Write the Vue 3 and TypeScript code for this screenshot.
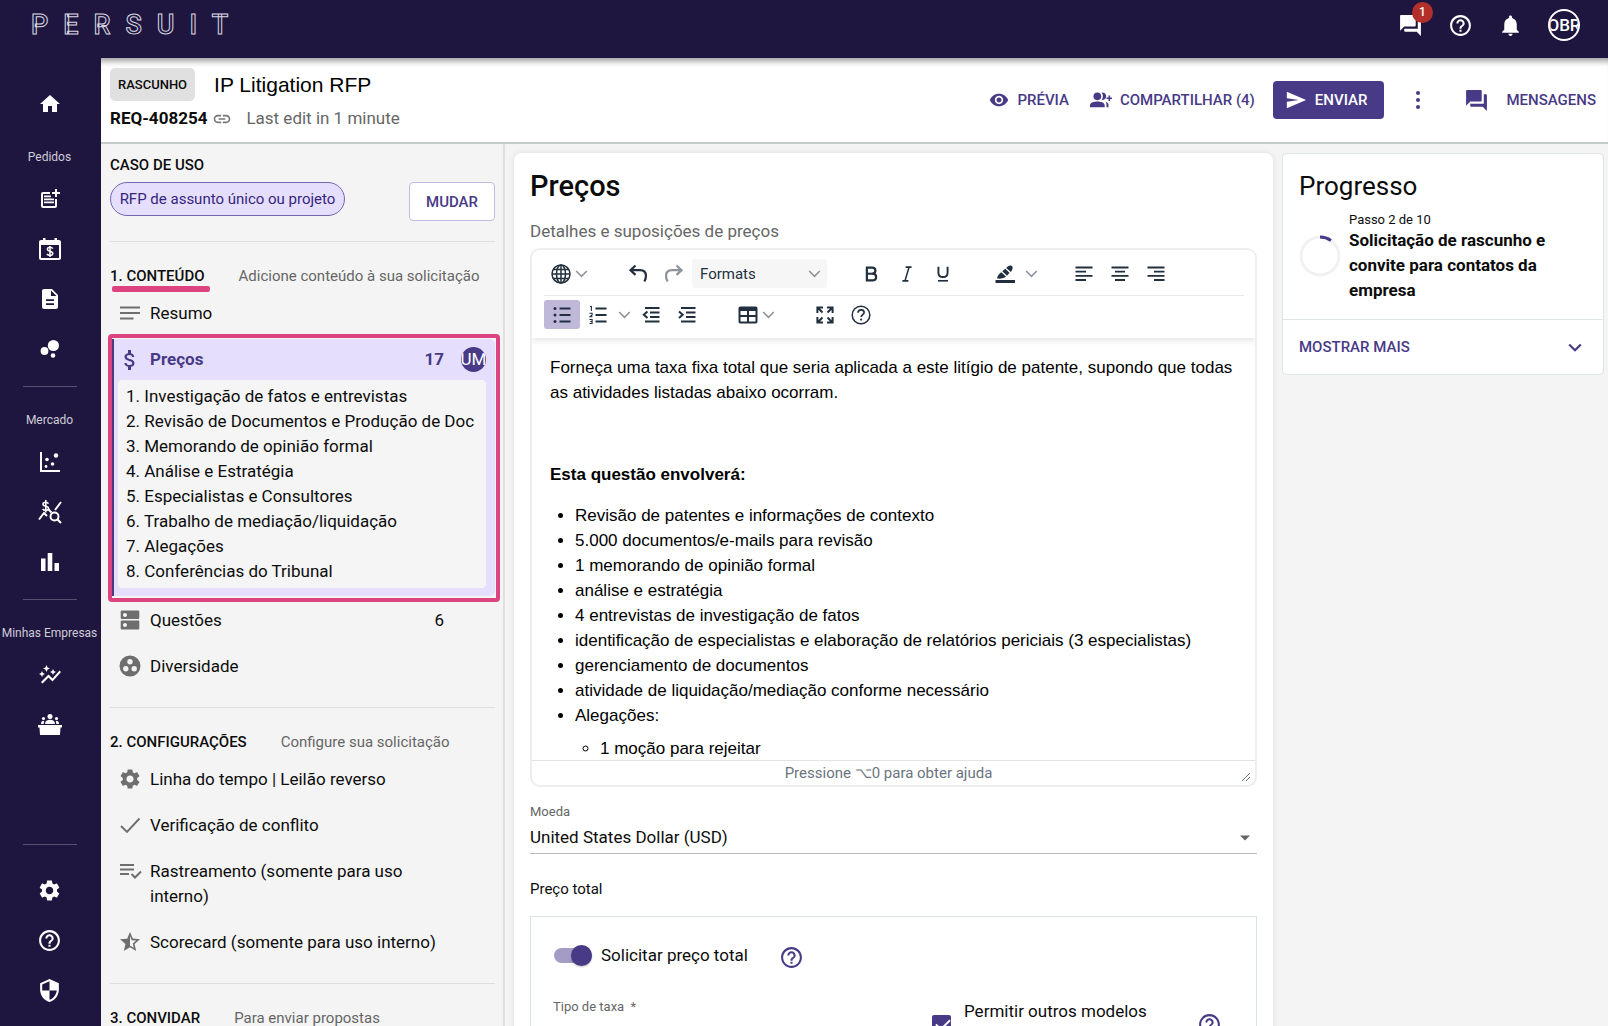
<script setup lang="ts">
import { h, ref } from 'vue'

const icons: Record<string, string> = {
  home: '<path d="M10 20v-6h4v6h5v-8h3L12 3 2 12h3v8z"/>',
  postAdd: '<path d="M17 19H5V7h7V5H5c-1.100 0-2 .9-2 2v12c0 1.100.9 2 2 2h12c1.100 0 2-.9 2-2v-7h-2z"/><path d="M19 2h-2v3h-3v2h3v3h2V7h3V5h-3zM6 8.500h7v1.800H6zM6 11.500h10v1.800H6zM6 14.500h10v1.800H6z"/>',
  calendar: '<path fill-rule="evenodd" d="M20 3h-1V1h-2.500v2h-9V1H5v2H3c-1.100 0-2 .9-2 2v16c0 1.100.9 2 2 2h18c1.100 0 2-.9 2-2V5c0-1.100-.9-2-2-2zm1 18H3V8h18z"/><path d="M14.800 11.600c-.6-.9-1.600-1.300-2.800-1.300-1.500 0-2.600.7-2.600 1.900 0 2.700 5.400 1.300 5.400 4.200 0 1.300-1.200 2-2.800 2-1.400 0-2.500-.5-3-1.500M12 9v11" fill="none" stroke="currentColor" stroke-width="1.500"/>',
  description: '<path d="M14 2H6c-1.100 0-2 .9-2 2v16c0 1.100.9 2 2 2h12c1.100 0 2-.9 2-2V8zm2 16H8v-1.700h8zm0-4H8v-1.700h8zm-3-5V3.500L18.500 9z"/>',
  bubbles: '<circle cx="6.500" cy="14" r="3.900"/><circle cx="15.400" cy="8.500" r="5.600"/><circle cx="15" cy="18.500" r="2.300"/>',
  scatter: '<path d="M2 2h2v18h18v2H2z"/><circle cx="8" cy="16.500" r="1.400"/><circle cx="9" cy="9.500" r="1.800"/><circle cx="14.500" cy="14" r="1.800"/><circle cx="18" cy="5.500" r="2.200"/>',
  queryStats: '<path d="M1 19.500 6 13l3 3M17 10l6-8M10 9l3.500 3.500" fill="none" stroke="currentColor" stroke-width="2"/><path d="M10.500 3.600C9.800 2.600 8.800 2.200 7.700 2.200 6.100 2.200 5 3 5 4.200c0 2.700 5.600 1.500 5.600 4.100 0 1.300-1.200 2-2.900 2-1.400 0-2.500-.5-3-1.500M7.800 0v12.500" fill="none" stroke="currentColor" stroke-width="1.600"/><circle cx="16.500" cy="16.500" r="4" fill="none" stroke="currentColor" stroke-width="2"/><path d="m19 19 4 4" stroke="currentColor" stroke-width="2.200"/>',
  bars: '<path d="M3 8.500h4.500V21H3zM16.500 13H21v8h-4.500zM9.700 3h4.600v18H9.700z"/>',
  autoGraph: '<path d="M14.060 9.940 12 9l2.060-.94L15 6l.94 2.060L18 9l-2.060.94L15 12zM4 14l.94-2.060L7 11l-2.060-.94L4 8l-.94 2.060L1 11l2.060.94zM8.500 9l1.090-2.410L12 5.500 9.590 4.410 8.500 2 7.410 4.410 5 5.500l2.410 1.090zM4.500 20.500l6-6.010 4 4L23 8.930l-1.410-1.410-7.090 7.970-4-4L3 19z"/>',
  meeting: '<path d="M0 12h24v2.500h-1.500L22 22H2l-.5-7.500H0z"/><circle cx="12" cy="3.500" r="2.500"/><path d="M7 11c0-2.800 2.200-4.200 5-4.200s5 1.400 5 4.200z"/><circle cx="5.500" cy="5.500" r="1.600"/><circle cx="18.500" cy="5.500" r="1.600"/><path d="M3 11c0-2 .8-3.200 3.200-3.200L5.700 11zM21 11c0-2-.8-3.200-3.200-3.200l.5 3.200z"/>',
  settings: '<path d="M19.140 12.940c.04-.3.060-.61.060-.94 0-.32-.020-.64-.070-.94l2.030-1.580c.18-.14.230-.41.120-.61l-1.920-3.320c-.12-.22-.37-.29-.59-.22l-2.390.96c-.5-.38-1.030-.7-1.620-.94l-.36-2.540c-.04-.24-.24-.41-.48-.41h-3.840c-.24 0-.43.170-.47.410l-.36 2.540c-.59.240-1.130.570-1.620.940l-2.390-.96c-.22-.08-.47 0-.59.220L2.740 8.870c-.12.210-.08.470.12.610l2.030 1.580c-.05.300-.09.630-.09.940s.02.640.07.940l-2.030 1.580c-.18.140-.23.410-.12.610l1.920 3.320c.12.220.37.290.59.220l2.390-.96c.5.380 1.030.7 1.620.94l.36 2.540c.05.240.24.410.48.410h3.840c.24 0 .44-.17.47-.41l.36-2.540c.59-.24 1.130-.56 1.620-.94l2.390.96c.22.080.47 0 .59-.22l1.920-3.320c.12-.22.070-.47-.12-.61zM12 15.600c-1.980 0-3.600-1.620-3.600-3.600s1.620-3.600 3.600-3.600 3.600 1.620 3.600 3.600-1.620 3.600-3.600 3.600z"/>',
  help: '<path d="M11 18h2v-2h-2zm1-16C6.480 2 2 6.480 2 12s4.480 10 10 10 10-4.480 10-10S17.520 2 12 2zm0 18c-4.410 0-8-3.590-8-8s3.590-8 8-8 8 3.590 8 8-3.590 8-8 8zm0-14c-2.210 0-4 1.790-4 4h2c0-1.100.9-2 2-2s2 .9 2 2c0 2-3 1.750-3 5h2c0-2.250 3-2.500 3-5 0-2.210-1.790-4-4-4z"/>',
  shield: '<path d="M12 1 3 5v6c0 5.550 3.840 10.740 9 12 5.160-1.260 9-6.450 9-12V5zm0 10.990h7c-.53 4.120-3.280 7.790-7 8.940V12H5V6.300l7-3.110z"/>',
  forum: '<path d="M21 6h-2v9H6v2c0 .55.450 1 1 1h11l4 4V7c0-.55-.45-1-1-1zm-4 6V3c0-.55-.45-1-1-1H3c-.55 0-1 .45-1 1v14l4-4h10c.55 0 1-.45 1-1z"/>',
  bell: '<path d="M12 22c1.100 0 2-.9 2-2h-4c0 1.100.89 2 2 2zm6-6v-5c0-3.070-1.640-5.640-4.500-6.320V4c0-.83-.67-1.500-1.500-1.500s-1.500.67-1.500 1.500v.68C7.630 5.360 6 7.920 6 11v5l-2 2v1h16v-1z"/>',
  eye: '<path d="M12 4.500C7 4.500 2.730 7.610 1 12c1.730 4.390 6 7.500 11 7.500s9.270-3.110 11-7.500c-1.730-4.390-6-7.500-11-7.500zM12 17c-2.760 0-5-2.240-5-5s2.240-5 5-5 5 2.240 5 5-2.240 5-5 5zm0-8c-1.660 0-3 1.340-3 3s1.340 3 3 3 3-1.340 3-3-1.340-3-3-3z"/>',
  groupAdd: '<circle cx="8" cy="8" r="4.200"/><path d="M0 20v-2.500C0 14.600 4.500 13.500 8 13.500s8 1.100 8 4V20zM12.500 3.900c3.800-.3 5.200 2 5.200 4.100s-1.500 4.400-5.200 4.100c2-2.200 2-6 0-8.200zM17 13.800c2 .7 3.200 1.800 3.200 3.700V20H18v-2.500c0-1.500-.4-2.700-1-3.700zM20.200 7h1.800v2.200h2.200V11H22v2.200h-1.800V11H18V9.200h2.200z"/>',
  send: '<path d="M2 21 23 12 2 3v7l13 2-13 2z"/>',
  more: '<circle cx="12" cy="5" r="2"/><circle cx="12" cy="12" r="2"/><circle cx="12" cy="19" r="2"/>',
  link: '<path d="M3.900 12c0-1.710 1.390-3.100 3.100-3.100h4V7H7c-2.760 0-5 2.240-5 5s2.240 5 5 5h4v-1.900H7c-1.710 0-3.100-1.390-3.100-3.100zM8 13h8v-2H8zm9-6h-4v1.900h4c1.710 0 3.100 1.390 3.100 3.100s-1.390 3.100-3.100 3.100h-4V17h4c2.760 0 5-2.240 5-5s-2.240-5-5-5z"/>',
  lines: '<path d="M2 5.500h20v1.900H2zM2 11h20v1.900H2zM2 16.500h13.500v1.900H2z"/>',
  dollar: '<path d="M11.800 10.900c-2.270-.59-3-1.200-3-2.150 0-1.090 1.010-1.850 2.700-1.850 1.780 0 2.440.85 2.500 2.100h2.210c-.07-1.720-1.120-3.300-3.210-3.810V2h-3v3.160c-1.940.42-3.500 1.680-3.500 3.610 0 2.310 1.910 3.460 4.700 4.130 2.500.6 3 1.480 3 2.410 0 .69-.49 1.790-2.700 1.790-2.060 0-2.870-.92-2.980-2.100h-2.200c.12 2.190 1.760 3.420 3.680 3.830V22h3v-3.150c1.950-.37 3.500-1.500 3.500-3.550 0-2.840-2.430-3.810-4.700-4.400z"/>',
  dns: '<path d="M20 12.500H4c-.8 0-1.300.5-1.300 1.300v6.400c0 .8.500 1.300 1.300 1.300h16c.8 0 1.300-.5 1.300-1.300v-6.400c0-.8-.5-1.300-1.300-1.300zM7 19c-1.100 0-2-.9-2-2s.9-2 2-2 2 .9 2 2-.9 2-2 2zM20 2.500H4c-.8 0-1.300.5-1.300 1.300v5.900c0 .8.500 1.300 1.300 1.300h16c.8 0 1.300-.5 1.300-1.300V3.800c0-.8-.5-1.300-1.300-1.300zM7 9c-1.100 0-2-.9-2-2s.9-2 2-2 2 .9 2 2-.9 2-2 2z"/>',
  groupWork: '<path fill-rule="evenodd" d="M12 1.500a10.500 10.500 0 1 0 0 21 10.500 10.500 0 0 0 0-21zM7.800 17.500a2.700 2.700 0 1 1 0-5.400 2.700 2.700 0 0 1 0 5.400zM9.300 7.700a2.700 2.700 0 1 1 5.400 0 2.700 2.700 0 0 1-5.400 0zM16.200 17.500a2.700 2.700 0 1 1 0-5.400 2.700 2.700 0 0 1 0 5.400z"/>',
  check: '<path d="m3 13 6 6L21.500 5.500" fill="none" stroke="currentColor" stroke-width="1.900"/>',
  rule: '<path d="M2 5h14v2H2zM2 9.500h14v2H2zM2 14h9v2H2z"/><path d="m13.500 15 3.500 3.500 6-6" fill="none" stroke="currentColor" stroke-width="2"/>',
  starHalf: '<path d="m22 9.240-7.190-.62L12 2 9.190 8.630 2 9.240l5.460 4.730L5.820 21 12 17.270 18.180 21l-1.630-7.030zM12 15.400V6.100l1.710 4.040 4.380.38-3.320 2.880 1 4.280z"/>',
  chevron: '<path d="m5 9 7 7 7-7" fill="none" stroke="currentColor" stroke-width="2.600"/>',
  chevronThin: '<path d="m4.500 8.500 7.500 7.500 7.500-7.500" fill="none" stroke="currentColor" stroke-width="2.200"/>',
  caret: '<path d="m7 9.500 5 5 5-5z"/>',
  globe: '<g fill="none" stroke="currentColor" stroke-width="1.500"><circle cx="12" cy="12" r="9"/><ellipse cx="12" cy="12" rx="4.500" ry="9"/><path d="M12 3v18M3 12h18M4.500 7.500h15M4.500 16.500h15"/></g>',
  undo: '<path d="M9.500 3.500 4.500 8.200l5 4.700M5 8.200h9c3.900 0 6 2.400 6 5.800 0 2-.6 3.800-1.600 5.500" fill="none" stroke="currentColor" stroke-width="2.200"/>',
  redo: '<path d="m14.500 3.500 5 4.700-5 4.700M19 8.200h-9c-3.900 0-6 2.400-6 5.800 0 2 .6 3.800 1.600 5.500" fill="none" stroke="currentColor" stroke-width="2.200"/>',
  bold: '<path d="M7.500 5h5.700c2.200 0 3.600 1.200 3.600 3.300 0 1.900-1.300 3.200-3.200 3.300 2.400.1 4 1.300 4 3.600 0 2.500-1.700 3.800-4.400 3.800H7.500z" fill="none" stroke="currentColor" stroke-width="2.400"/><path d="M7.500 11.700h7" stroke="currentColor" stroke-width="2.200"/>',
  italic: '<path d="M10.500 4.500H17M7 19.500h6.500M14.200 4.500l-4.400 15" fill="none" stroke="currentColor" stroke-width="1.700"/>',
  underline: '<path d="M7 4v6.500c0 3 1.800 4.700 5 4.700s5-1.700 5-4.700V4" fill="none" stroke="currentColor" stroke-width="2.100"/><path d="M6.500 18.500h11v1.800h-11z"/>',
  highlight: '<path d="M2.500 18h19.500v3H2.500z"/><path d="M4 16.500c.5-3 2-4.500 4.200-6.300l4.800 4.300c-2 1.700-5 2.500-9 2zM9.300 9.300l3-2.500 4.200 4-2.500 3zM13.200 6c1.600-2 3.500-3 5.500-2.200 1.500 1.200 1.300 3.400-.8 6.200z"/>',
  alignLeft: '<path d="M3.500 4.500h17v1.900h-17zM3.500 8.700H14v1.900H3.500zM3.500 12.900h17v1.900h-17zM3.500 17.100H14V19H3.500z"/>',
  alignCenter: '<path d="M3.500 4.500h17v1.900h-17zM7 8.700h10v1.900H7zM3.500 12.900h17v1.900h-17zM7 17.100h10V19H7z"/>',
  alignRight: '<path d="M3.500 4.500h17v1.900h-17zM10 8.700h10.500v1.900H10zM3.500 12.900h17v1.900h-17zM10 17.100h10.500V19H10z"/>',
  bullets: '<circle cx="5" cy="5.500" r="1.500"/><circle cx="5" cy="12" r="1.500"/><circle cx="5" cy="18.500" r="1.500"/><path d="M9.500 4.500h11v2h-11zM9.500 11h11v2h-11zM9.500 17.500h11v2h-11z"/>',
  numbers: '<path d="M9.500 4.500h11v2h-11zM9.500 11h11v2h-11zM9.500 17.500h11v2h-11z"/><path d="M4 3.500h1.400V8M3.500 10.200h2.600v1.700L4 13.800h2.500M3.500 16.500h2.600v4H3.500M4.300 18.500h1.800" fill="none" stroke="currentColor" stroke-width="1.100"/>',
  outdent: '<path d="M6 4h14.500v2H6zM11 8.500h9.500v2H11zM11 13h9.500v2H11zM6 17.500h14.500v2H6z"/><path d="M8.500 8.500 4.800 11.800l3.700 3.200" fill="none" stroke="currentColor" stroke-width="2"/>',
  indent: '<path d="M6 4h14.500v2H6zM11 8.500h9.500v2H11zM11 13h9.500v2H11zM6 17.500h14.500v2H6z"/><path d="m4 8.500 3.700 3.300L4 15" fill="none" stroke="currentColor" stroke-width="2"/>',
  table: '<path fill-rule="evenodd" d="M4.500 3.500h15c1.200 0 2 .8 2 2v13c0 1.200-.8 2-2 2h-15c-1.200 0-2-.8-2-2v-13c0-1.200.8-2 2-2zM4.500 8v4h6.500V8zM13 8v4h6.500V8zM4.500 14v4.500h6.500V14zM13 14v4.500h6.500V14z"/>',
  fullscreen: '<path d="M4.400 10V4.400H10M14 4.400h5.600V10M19.600 14v5.600H14M10 19.600H4.400V14M4.800 4.800l4.700 4.700M19.200 4.800l-4.700 4.700M19.200 19.200l-4.700-4.700M4.800 19.200l4.700-4.700" fill="none" stroke="currentColor" stroke-width="2"/>',
  helpThin: '<circle cx="12" cy="12" r="8.800" fill="none" stroke="currentColor" stroke-width="1.500"/><path d="M9 9.800c.1-1.800 1.300-2.900 3.100-2.900 1.700 0 3 1 3 2.600 0 2.100-2.900 2.200-2.900 4.600" fill="none" stroke="currentColor" stroke-width="1.700"/><circle cx="12.100" cy="16.600" r="1.100"/>',
}

const Icon = (props: { name: string; size?: number }) =>
  h('svg', {
    viewBox: '0 0 24 24',
    width: props.size ?? 24,
    height: props.size ?? 24,
    fill: 'currentColor',
    'aria-hidden': 'true',
    innerHTML: icons[props.name],
  })
Icon.props = ['name', 'size']

interface NavItem { icon: string; label: string }
interface NavGroup { title: string; items: NavItem[] }

const navGroups: NavGroup[] = [
  {
    title: 'Pedidos',
    items: [
      { icon: 'postAdd', label: 'Novo pedido' },
      { icon: 'calendar', label: 'Faturas' },
      { icon: 'description', label: 'Documentos' },
      { icon: 'bubbles', label: 'Grupos' },
    ],
  },
  {
    title: 'Mercado',
    items: [
      { icon: 'scatter', label: 'Dispersão' },
      { icon: 'queryStats', label: 'Taxas' },
      { icon: 'bars', label: 'Relatórios' },
    ],
  },
  {
    title: 'Minhas Empresas',
    items: [
      { icon: 'autoGraph', label: 'Desempenho' },
      { icon: 'meeting', label: 'Painel' },
    ],
  },
]
const footerNav: NavItem[] = [
  { icon: 'settings', label: 'Configurações' },
  { icon: 'help', label: 'Ajuda' },
  { icon: 'shield', label: 'Segurança' },
]

const priceItems = [
  'Investigação de fatos e entrevistas',
  'Revisão de Documentos e Produção de Doc',
  'Memorando de opinião formal',
  'Análise e Estratégia',
  'Especialistas e Consultores',
  'Trabalho de mediação/liquidação',
  'Alegações',
  'Conferências do Tribunal',
]
const contentItems = [
  { icon: 'dns', label: 'Questões', count: 6 },
  { icon: 'groupWork', label: 'Diversidade', count: null },
]
const configItems = [
  { icon: 'settings', label: 'Linha do tempo | Leilão reverso' },
  { icon: 'check', label: 'Verificação de conflito' },
  { icon: 'rule', label: 'Rastreamento (somente para uso interno)' },
  { icon: 'starHalf', label: 'Scorecard (somente para uso interno)' },
]
const scope = [
  'Revisão de patentes e informações de contexto',
  '5.000 documentos/e-mails para revisão',
  '1 memorando de opinião formal',
  'análise e estratégia',
  '4 entrevistas de investigação de fatos',
  'identificação de especialistas e elaboração de relatórios periciais (3 especialistas)',
  'gerenciamento de documentos',
  'atividade de liquidação/mediação conforme necessário',
]

const askTotal = ref(true)
const allowOther = ref(true)
</script>

<template>
  <div class="app">
    <header class="topbar">
      <a href="#" class="logo">PERSUIT</a>
      <div class="top-actions">
        <button type="button" class="plain chat" aria-label="Conversas">
          <Icon name="forum" :size="25" /><span class="badge">1</span>
        </button>
        <button type="button" class="plain" aria-label="Ajuda"><Icon name="help" :size="25" /></button>
        <button type="button" class="plain" aria-label="Notificações"><Icon name="bell" :size="25" /></button>
        <button type="button" class="plain user"><span>OBR</span></button>
      </div>
    </header>

    <div class="body">
      <nav class="rail">
        <a href="#" class="rail-item" aria-label="Início"><Icon name="home" /></a>
        <template v-for="(group, i) in navGroups" :key="group.title">
          <hr v-if="i > 0" class="rail-rule" />
          <div class="rail-title">{{ group.title }}</div>
          <a v-for="item in group.items" :key="item.icon" href="#" class="rail-item" :aria-label="item.label">
            <Icon :name="item.icon" />
          </a>
        </template>
        <div class="rail-foot">
          <hr class="rail-rule" />
          <a v-for="item in footerNav" :key="item.icon" href="#" class="rail-item" :aria-label="item.label">
            <Icon :name="item.icon" :size="25" />
          </a>
        </div>
      </nav>

      <div class="page">
        <div class="page-head">
          <div class="ident">
            <div class="ident-row">
              <span class="status">RASCUNHO</span>
              <h1 class="title">IP Litigation RFP</h1>
            </div>
            <div class="ident-row second">
              <strong>REQ-408254</strong>
              <button type="button" class="plain link" aria-label="Copiar link"><Icon name="link" :size="20" /></button>
              <span class="muted">Last edit in 1 minute</span>
            </div>
          </div>
          <div class="head-actions">
            <button type="button" class="action"><Icon name="eye" :size="20" />PRÉVIA</button>
            <button type="button" class="action share"><Icon name="groupAdd" :size="22" />COMPARTILHAR (4)</button>
            <button type="button" class="action send"><Icon name="send" :size="22" />ENVIAR</button>
            <button type="button" class="action dots" aria-label="Mais opções"><Icon name="more" /></button>
            <button type="button" class="action messages"><Icon name="forum" :size="25" />MENSAGENS</button>
          </div>
        </div>

        <div class="columns">
          <aside class="outline">
            <h2 class="caps">CASO DE USO</h2>
            <div class="use-case">
              <span class="pill">RFP de assunto único ou projeto</span>
              <button type="button" class="change">MUDAR</button>
            </div>
            <hr />
            <div class="section-head">
              <h2 class="caps marked">1. CONTEÚDO</h2><span>Adicione conteúdo à sua solicitação</span>
            </div>
            <a href="#" class="step"><Icon name="lines" class="step-icon" /><span>Resumo</span></a>
            <div class="current">
              <a href="#" class="current-head">
                <Icon name="dollar" /><span>Preços</span>
                <span class="count">17</span><span class="avatar"><span>UM</span></span>
              </a>
              <ol class="prices">
                <li v-for="(item, i) in priceItems" :key="item"><span>{{ i + 1 }}.</span> {{ item }}</li>
              </ol>
            </div>
            <div class="steps">
              <a v-for="item in contentItems" :key="item.label" href="#" class="step">
                <Icon :name="item.icon" class="step-icon" /><span>{{ item.label }}</span>
                <span v-if="item.count" class="count">{{ item.count }}</span>
              </a>
            </div>
            <hr class="wide" />
            <div class="section-head">
              <h2 class="caps">2. CONFIGURAÇÕES</h2><span>Configure sua solicitação</span>
            </div>
            <div class="steps flush">
              <a v-for="item in configItems" :key="item.label" href="#" class="step">
                <Icon :name="item.icon" class="step-icon" /><span class="step-text">{{ item.label }}</span>
              </a>
            </div>
            <hr class="wide" />
            <div class="section-head">
              <h2 class="caps">3. CONVIDAR</h2><span>Para enviar propostas</span>
            </div>
          </aside>

          <main class="card">
            <h2 class="card-title">Preços</h2>
            <div id="details-label" class="field-label">Detalhes e suposições de preços</div>
            <div class="editor">
              <div class="toolbar" role="toolbar">
                <div class="tools">
                  <div class="group">
                    <button type="button" class="tool split" aria-label="Idioma"><Icon name="globe" /><Icon name="chevronThin" :size="17" class="faint" /></button>
                  </div>
                  <div class="group">
                    <button type="button" class="tool" aria-label="Desfazer"><Icon name="undo" /></button>
                    <button type="button" class="tool faint" aria-label="Refazer"><Icon name="redo" /></button>
                    <div class="formats">
                      <select aria-label="Formats"><option>Formats</option></select>
                      <Icon name="chevronThin" :size="17" class="faint formats-arrow" />
                    </div>
                  </div>
                  <div class="group">
                    <button type="button" class="tool" aria-label="Negrito"><Icon name="bold" :size="22" /></button>
                    <button type="button" class="tool" aria-label="Itálico"><Icon name="italic" :size="22" /></button>
                    <button type="button" class="tool" aria-label="Sublinhado"><Icon name="underline" :size="22" /></button>
                  </div>
                  <div class="group">
                    <button type="button" class="tool" aria-label="Realce"><Icon name="highlight" /></button>
                    <button type="button" class="tool narrow faint" aria-label="Cor do realce"><Icon name="chevronThin" :size="17" /></button>
                  </div>
                  <div class="group">
                    <button type="button" class="tool" aria-label="Alinhar à esquerda"><Icon name="alignLeft" /></button>
                    <button type="button" class="tool" aria-label="Centralizar"><Icon name="alignCenter" /></button>
                    <button type="button" class="tool" aria-label="Alinhar à direita"><Icon name="alignRight" /></button>
                  </div>
                </div>
                <div class="tools lower">
                  <div class="group">
                    <button type="button" class="tool active" aria-label="Marcadores"><Icon name="bullets" /></button>
                    <button type="button" class="tool" aria-label="Numeração"><Icon name="numbers" /></button>
                    <button type="button" class="tool narrow faint" aria-label="Tipo de numeração"><Icon name="chevronThin" :size="17" /></button>
                    <button type="button" class="tool" aria-label="Diminuir recuo"><Icon name="outdent" /></button>
                    <button type="button" class="tool" aria-label="Aumentar recuo"><Icon name="indent" /></button>
                  </div>
                  <div class="group">
                    <button type="button" class="tool split" aria-label="Tabela"><Icon name="table" /><Icon name="chevronThin" :size="17" class="faint" /></button>
                  </div>
                  <div class="group">
                    <button type="button" class="tool" aria-label="Tela cheia"><Icon name="fullscreen" /></button>
                    <button type="button" class="tool" aria-label="Ajuda do editor"><Icon name="helpThin" /></button>
                  </div>
                </div>
              </div>
              <div class="content" role="textbox" contenteditable="true" spellcheck="false" aria-labelledby="details-label">
                <p>Forneça uma taxa fixa total que seria aplicada a este litígio de patente, supondo que todas as atividades listadas abaixo ocorram.</p>
                <p><br /></p>
                <p><strong>Esta questão envolverá:</strong></p>
                <ul>
                  <li v-for="line in scope" :key="line">{{ line }}</li>
                  <li>Alegações:
                    <ul><li>1 moção para rejeitar</li></ul>
                  </li>
                </ul>
              </div>
              <div class="statusbar">
                <span>Pressione ⌥0 para obter ajuda</span>
                <svg class="grip" viewBox="0 0 10 10" width="10" height="10" aria-hidden="true">
                  <path d="M1 9 9 1M5 9l4-4" fill="none" stroke="currentColor" stroke-width="1" />
                </svg>
              </div>
            </div>

            <div class="currency">
              <label for="currency">Moeda</label>
              <div class="select">
                <select id="currency"><option>United States Dollar (USD)</option></select>
                <Icon name="caret" class="select-arrow" />
              </div>
            </div>

            <h3 class="total-title">Preço total</h3>
            <section class="total">
              <div class="toggle-row">
                <label class="toggle">
                  <input v-model="askTotal" type="checkbox" role="switch" />
                  <span>Solicitar preço total</span>
                </label>
                <button type="button" class="plain hint" aria-label="Sobre o preço total"><Icon name="help" :size="25" /></button>
              </div>
              <div class="fee-row">
                <div class="fee-label">Tipo de taxa&nbsp; *</div>
                <div class="allow">
                  <input id="allow-other" v-model="allowOther" type="checkbox" />
                  <label for="allow-other">Permitir outros modelos</label>
                  <button type="button" class="plain hint" aria-label="Sobre outros modelos"><Icon name="help" :size="25" /></button>
                </div>
              </div>
            </section>
          </main>

          <aside class="progress">
            <h2>Progresso</h2>
            <div class="progress-body">
              <svg class="ring" viewBox="0 0 42 42" width="42" height="42" aria-hidden="true">
                <circle cx="21" cy="21" r="19" fill="none" stroke="#f2f2f2" stroke-width="3" />
                <path d="M21 2a19 19 0 0 1 11 3.500" fill="none" stroke="#483a87" stroke-width="3" />
              </svg>
              <div>
                <div class="step-no">Passo 2 de 10</div>
                <strong>Solicitação de rascunho e convite para contatos da empresa</strong>
              </div>
            </div>
            <button type="button" class="more">MOSTRAR MAIS<Icon name="chevron" :size="20" /></button>
          </aside>
        </div>
      </div>
    </div>
  </div>
</template>

<style>
body { margin: 0; }
</style>

<style scoped>
.app, .app * { box-sizing: border-box; }
.app {
  display: flex;
  flex-direction: column;
  height: 100vh;
  overflow: hidden;
  font: 17px/25px Roboto, sans-serif;
  color: #0c0c0c;
  background: #f4f4f4;
}
button, select { font-family: inherit; }
svg { display: block; flex: none; }
a { color: inherit; text-decoration: none; }
h1, h2, h3, p, ol, ul { margin: 0; padding: 0; }
hr { width: 100%; height: 1px; margin: 20px 0 0; border: 0; background: #dedede; }
.plain { display: flex; padding: 0; border: 0; background: none; color: inherit; cursor: pointer; }
.muted { color: #666; }

.topbar {
  display: flex;
  flex: none;
  justify-content: space-between;
  align-items: center;
  height: 58px;
  padding: 0 28px 8px 31px;
  background: #1e163e;
  color: #fff;
}
.logo {
  font-size: 27px;
  line-height: 32px;
  letter-spacing: 15px;
  color: #1e163e;
  font-weight: 500;
  -webkit-text-stroke: 1px #d8d6e2;
}
.top-actions { display: flex; align-items: center; gap: 25px; }
.chat { position: relative; }
.badge {
  position: absolute;
  top: -11px;
  left: 14px;
  width: 21px;
  height: 21px;
  border-radius: 50%;
  background: #b3302a;
  font: 500 12px/21px Roboto, sans-serif;
  text-align: center;
}
.user {
  justify-content: center;
  align-items: center;
  width: 32px;
  height: 32px;
  overflow: hidden;
  border: 2px solid #fff;
  border-radius: 50%;
  font-size: 17px;
  font-weight: 500;
}

.body { display: flex; flex: 1; min-height: 0; }
.rail {
  display: flex;
  flex: none;
  flex-direction: column;
  align-items: center;
  width: 101px;
  padding: 21px 2px 11px 0;
  background: #1e163e;
  color: #fff;
}
.rail-item { display: flex; justify-content: center; align-items: center; height: 50px; width: 50px; }
.rail-title {
  padding: 20px 0 9px;
  font-size: 12px;
  line-height: 16px;
  white-space: nowrap;
  color: #cfccd9;
}
.rail-rule { width: 54px; margin: 12px 0 5px; background: #57506f; }
.rail-foot { display: flex; flex-direction: column; align-items: center; margin-top: auto; }
.rail-foot .rail-rule { margin: 0 0 20px; }

.page { display: flex; flex: 1; flex-direction: column; min-width: 0; }
.page-head {
  display: flex;
  flex: none;
  justify-content: space-between;
  height: 86px;
  padding: 10px 12px 0 9px;
  border-bottom: 2px solid #c4cccb;
  background: #fff;
  box-shadow: inset 0 8px 6px -5px #0006;
}
.ident-row { display: flex; align-items: center; height: 33px; }
.ident-row.second { height: 25px; margin-top: 5px; }
.status {
  padding: 4px 8px;
  border-radius: 5px;
  background: #e0e0e0;
  font-size: 13px;
  font-weight: 500;
}
.title { margin-left: 19px; font: 21px/28px "Liberation Sans", Arial, sans-serif; color: #000; }
.link { margin: 0 14px 0 5px; color: #777; }
.head-actions { display: flex; align-items: center; height: 64px; }
.action {
  display: flex;
  align-items: center;
  gap: 8px;
  padding: 0;
  border: 0;
  background: none;
  font-size: 15px;
  font-weight: 500;
  line-height: 20px;
  color: #483a87;
  cursor: pointer;
}
.share { margin: 0 18px 0 21px; }
.send { height: 38px; padding: 0 17px 0 12px; border-radius: 4px; background: #483a87; color: #fff; }
.dots { margin: 0 34px 0 22px; }
.messages { gap: 17px; }

.columns { display: flex; flex: 1; align-items: flex-start; min-height: 0; overflow: hidden; }

.outline {
  flex: none;
  align-self: stretch;
  width: 404px;
  padding: 11px 8px 0 9px;
  overflow: hidden;
  border-right: 2px solid #e0e0e0;
}
.caps { font-size: 15px; font-weight: 500; line-height: 20px; white-space: nowrap; }
.use-case { display: flex; justify-content: space-between; align-items: flex-start; margin-top: 7px; }
.pill {
  height: 34px;
  padding: 0 8px;
  border: 1px solid #7466b0;
  border-radius: 17px;
  background: #e5defd;
  font-size: 15px;
  line-height: 32px;
  color: #35267c;
  min-width: 235px;
  text-align: center;
}
.change {
  width: 86px;
  height: 39px;
  border: 1px solid #c3bce0;
  border-radius: 4px;
  background: #fff;
  font-size: 15px;
  font-weight: 500;
  color: #483a87;
}
.section-head { display: flex; gap: 34px; margin: 24px 0 15px; font-size: 15px; line-height: 20px; color: #666; white-space: nowrap; }
.section-head .caps { color: #0c0c0c; }
.marked { position: relative; }
.marked::after {
  position: absolute;
  top: 20px;
  right: -5px;
  left: 2px;
  height: 6px;
  border-radius: 2px;
  background: #dd447f;
  content: "";
}
.step { display: flex; gap: 8px; padding: 0 51px 0 8px; }
.step-icon { color: #6e6e6e; }
.count { margin-left: auto; }
.current {
  position: relative;
  margin: 13px 0 0 2px;
  padding: 0 9px 8px 4px;
  border-left: 2px solid #483a87;
  border-radius: 0 5px 5px 0;
  background: #e5defd;
}
.current::after {
  position: absolute;
  inset: -5px -5px -6px -6px;
  border: 4px solid #dd447f;
  border-radius: 4px;
  pointer-events: none;
  content: "";
}
.current-head { display: flex; align-items: center; gap: 8px; height: 41px; font-weight: 700; color: #483a87; }
.avatar {
  display: flex;
  flex: none;
  justify-content: center;
  width: 25px;
  height: 25px;
  margin-left: 9px;
  overflow: hidden;
  border-radius: 50%;
  background: #483a87;
  font-weight: 400;
  color: #fff;
}
.prices { padding: 4px 8px; overflow: hidden; border-radius: 4px; background: #f5f5f5; list-style: none; white-space: nowrap; }
.steps { display: flex; flex-direction: column; gap: 21px; margin-top: 12px; }
.steps.flush { margin-top: 0; }
.step-text { flex: 1; }
hr.wide { margin-top: 28px; }

.card {
  flex: 1;
  min-width: 0;
  margin: 9px 9px 0;
  padding: 16px 16px 40px;
  border-radius: 8px;
  background: #fff;
  box-shadow: 0 0 6px #0000001a;
}
.card-title { font-size: 29px; font-weight: 500; line-height: 34px; }
.field-label { margin-top: 16px; color: #666; }
.editor { margin-top: 4px; overflow: hidden; border: 2px solid #eee; border-radius: 10px; }
.toolbar { position: relative; padding: 0 11px 0 12px; background: #fff; box-shadow: 0 3px 6px #0000001a; color: #222f3e; }
.tools { display: flex; gap: 26px; padding: 9px 0 7px; border-bottom: 1px solid #e9e9e9; }
.tools.lower { padding: 4px 0 9px; border: 0; }
.group { display: flex; }
.tool {
  display: flex;
  justify-content: center;
  align-items: center;
  width: 36px;
  height: 29px;
  padding: 0;
  border: 0;
  border-radius: 3px;
  background: none;
  color: inherit;
}
.tool.narrow { width: 17px; }
.tool.split { width: 50px; }
.tool.active { background: #bfb8d8; }
.tool.faint, .faint { color: #8d939b; }
.formats { position: relative; width: 135px; }
.formats select {
  width: 100%;
  height: 29px;
  padding: 0 8px;
  border: 0;
  border-radius: 3px;
  appearance: none;
  background: #f6f6f6;
  font-size: 15px;
  color: #222f3e;
}
.formats-arrow { position: absolute; top: 6px; right: 4px; pointer-events: none; }
.content {
  height: 422px;
  padding: 17px 18px 0;
  overflow: hidden;
  outline: 0;
  font-family: "Liberation Sans", Arial, sans-serif;
  color: #000;
}
.content p { margin-bottom: 16px; }
.content ul { padding-left: 25px; }
.content ul ul { margin-top: 8px; }
.statusbar {
  position: relative;
  height: 25px;
  padding-right: 10px;
  border-top: 1px solid #e3e3e3;
  font-size: 15px;
  line-height: 25px;
  text-align: center;
  color: #6b7480;
}
.grip { position: absolute; right: 4px; bottom: 3px; }

.currency { margin-top: 17px; }
.currency label { display: block; font-size: 13px; line-height: 16px; color: #666; }
.select { position: relative; }
.select select {
  display: block;
  width: 100%;
  height: 34px;
  padding: 0;
  border: 0;
  border-bottom: 1px solid #b9bcbc;
  appearance: none;
  background: none;
  font-size: 17px;
  color: #0c0c0c;
}
.select-arrow { position: absolute; top: 6px; right: 0; color: #666; pointer-events: none; }
.total-title { margin-top: 25px; font-size: 15px; font-weight: 400; line-height: 20px; }
.total { margin-top: 17px; padding: 26px 22px; border: 1px solid #dce1e1; }
.toggle-row { display: flex; align-items: center; height: 25px; }
.toggle { display: flex; align-items: center; gap: 9px; }
.toggle input {
  position: relative;
  width: 38px;
  height: 15px;
  margin: 0 0 0 1px;
  border-radius: 8px;
  appearance: none;
  background: #a59cc6;
}
.toggle input::after {
  position: absolute;
  top: -3px;
  right: 0;
  width: 21px;
  height: 21px;
  border-radius: 50%;
  background: #483a87;
  box-shadow: 0 1px 2px #0004;
  content: "";
}
.toggle input:not(:checked)::after { right: auto; left: 0; }
.hint { color: #483a87; }
.toggle-row .hint { margin-left: 31px; padding-top: 3px; }
.fee-row { display: flex; justify-content: space-between; margin-top: 31px; }
.fee-label { font-size: 13px; line-height: 16px; color: #666; }
.allow { display: flex; align-items: center; width: 302px; height: 50px; }
.allow label { flex: 1; align-self: flex-start; margin-left: 13px; }
.allow .hint { margin-right: 12px; }
.allow input {
  width: 19px;
  height: 19px;
  margin: 0;
  border-radius: 2px;
  appearance: none;
  border: 2px solid #483a87;
}
.allow input:checked { background: #483a87; }
.allow input::before {
  display: block;
  width: 12px;
  height: 6px;
  margin: 2px 0 0 2px;
  border: solid #fff;
  border-width: 0 0 2px 2px;
  transform: rotate(-45deg);
  content: "";
}

.progress {
  flex: none;
  width: 322px;
  margin: 9px 4px 0 0;
  border: 1px solid #dfe4e4;
  border-radius: 5px;
  background: #fff;
}
.progress h2 { padding: 17px 16px 0; font-size: 26px; font-weight: 400; line-height: 30px; }
.progress-body { display: flex; gap: 8px; align-items: center; padding: 10px 16px 16px; }
.ring { margin-bottom: 2px; }
.step-no { font-size: 13px; line-height: 17px; }
.more {
  display: flex;
  justify-content: space-between;
  align-items: center;
  width: 100%;
  height: 55px;
  padding: 0 18px 0 16px;
  border: 0;
  border-top: 1px solid #dfe4e4;
  background: none;
  font-size: 15px;
  font-weight: 500;
  color: #483a87;
}
</style>
